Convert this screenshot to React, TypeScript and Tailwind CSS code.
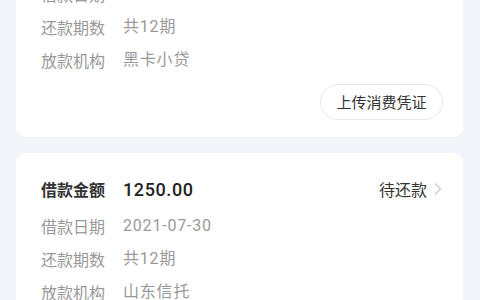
import React from "react";

const font = { fontFamily: '"Noto Sans CJK SC", "Noto Sans", sans-serif' };
const numFont = { fontFamily: 'Roboto, "Noto Sans CJK SC", sans-serif' };

function Row({ label, value }: { label: string; value: string }) {
  return (
    <div className="flex h-[33px] items-center text-[16px] text-[#999999]">
      <span className="w-[82px] shrink-0">{label}</span>
      <span className="tracking-[0.8px]" style={numFont}>{value}</span>
    </div>
  );
}

function Card({ amount, date, org, status, button }: { amount: string; date: string; org: string; status: string; button?: boolean }) {
  return (
    <div className={button ? "rounded-[10px] bg-white pl-[25px] pr-[20px] pt-[20px] pb-[17px]" : "rounded-[10px] bg-white pl-[25px] pr-[20px] pt-[20px] pb-[16px]"}>
      <div className="flex h-[32px] items-center">
        <span className="w-[82px] shrink-0 text-[16px] font-bold text-[#333333]">借款金额</span>
        <span className="text-[18px] font-medium tracking-[0.6px] text-[#222222]" style={numFont}>{amount}</span>
        <span className="ml-auto flex items-center text-[16px] text-[#333333]">
          {status}
          <svg width="10" height="14" viewBox="0 0 10 14" className="ml-[6px]">
            <path d="M2 1.5 L7.5 7 L2 12.5" fill="none" stroke="#cccccc" strokeWidth="1.3" />
          </svg>
        </span>
      </div>
      <div className="mt-[4px]">
        <Row label="借款日期" value={date} />
        <Row label="还款期数" value="共12期" />
        <Row label="放款机构" value={org} />
      </div>
      {button && (
        <div className="mt-[8px] flex justify-end">
          <button className="h-[36px] w-[123px] rounded-full border border-[#e6e6e6] text-[15px] text-[#333333]">
            上传消费凭证
          </button>
        </div>
      )}
    </div>
  );
}

export default function App() {
  return (
    <div className="h-[300px] w-[480px] overflow-hidden bg-[#f3f5fa] pl-[16px] pr-[17px]" style={font}>
      <div className="-mt-[79px] flex flex-col gap-[16px]">
        <Card amount="1500.00" date="2021-07-28" org="黑卡小贷" status="待还款" button />
        <Card amount="1250.00" date="2021-07-30" org="山东信托" status="待还款" />
      </div>
    </div>
  );
}
